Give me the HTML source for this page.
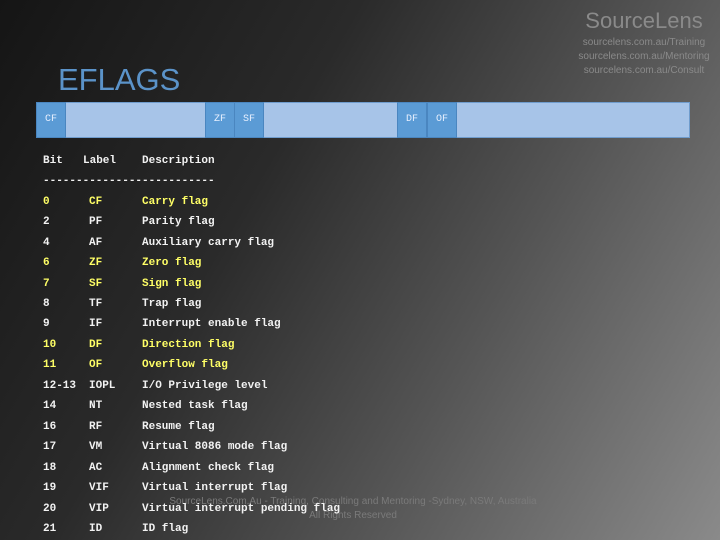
<!DOCTYPE html>
<html><head><meta charset="utf-8"><style>
*{margin:0;padding:0;box-sizing:border-box}
html,body{width:720px;height:540px;overflow:hidden}
body{position:relative;
background:linear-gradient(120deg,#151515 0%,#2a2a2a 35%,#555 65%,#8a8a8a 100%);
font-family:"Liberation Sans",sans-serif}
.abs{position:absolute;white-space:pre}
.logo{color:#8a8a8a;text-align:center;left:564px;width:160px}
.bar{position:absolute;left:36px;top:102px;width:654px;height:36px;background:#a7c4e8;border:1px solid #6f9ccd}
.c{position:absolute;top:102px;height:36px;background:#5b9bd5;border:1px solid #4a86c0;color:#e8f0ff;font:10px "Liberation Mono",monospace;padding-left:8px;line-height:34px}
.m{font-family:"Liberation Mono",monospace;font-size:11px;font-weight:bold;color:#f2f2f2;line-height:13px}
.y{color:#ffff66}
.foot{color:#7a7a7a;font-size:10px;text-align:center;width:400px;left:153px}
</style></head><body>
<div class="abs logo" style="top:8px;font-size:22px">SourceLens</div>
<div class="abs logo" style="top:37px;font-size:10px">sourcelens.com.au/Training</div>
<div class="abs logo" style="top:51px;font-size:10px">sourcelens.com.au/Mentoring</div>
<div class="abs logo" style="top:65px;font-size:10px">sourcelens.com.au/Consult</div>
<div class="abs" style="left:58px;top:62px;font-size:31px;color:#5b93c9">EFLAGS</div>
<div class="bar"></div>
<div class="c" style="left:36px;width:30px">CF</div>
<div class="c" style="left:205px;width:30px">ZF</div>
<div class="c" style="left:234px;width:30px">SF</div>
<div class="c" style="left:397px;width:30px">DF</div>
<div class="c" style="left:427px;width:30px">OF</div>
<div class="abs foot" style="top:496px">SourceLens.Com.Au - Training, Consulting and Mentoring -Sydney, NSW, Australia</div>
<div class="abs foot" style="top:510px">All Rights Reserved</div>
<div class="abs m" style="left:43px;top:155px">Bit</div><div class="abs m" style="left:83px;top:155px">Label</div><div class="abs m" style="left:142px;top:155px">Description</div>
<div class="abs m" style="left:43px;top:175px">--------------------------</div>
<div class="abs m y" style="left:43px;top:196px">0</div><div class="abs m y" style="left:89px;top:196px">CF</div><div class="abs m y" style="left:142px;top:196px">Carry flag</div>
<div class="abs m" style="left:43px;top:216px">2</div><div class="abs m" style="left:89px;top:216px">PF</div><div class="abs m" style="left:142px;top:216px">Parity flag</div>
<div class="abs m" style="left:43px;top:237px">4</div><div class="abs m" style="left:89px;top:237px">AF</div><div class="abs m" style="left:142px;top:237px">Auxiliary carry flag</div>
<div class="abs m y" style="left:43px;top:257px">6</div><div class="abs m y" style="left:89px;top:257px">ZF</div><div class="abs m y" style="left:142px;top:257px">Zero flag</div>
<div class="abs m y" style="left:43px;top:278px">7</div><div class="abs m y" style="left:89px;top:278px">SF</div><div class="abs m y" style="left:142px;top:278px">Sign flag</div>
<div class="abs m" style="left:43px;top:298px">8</div><div class="abs m" style="left:89px;top:298px">TF</div><div class="abs m" style="left:142px;top:298px">Trap flag</div>
<div class="abs m" style="left:43px;top:318px">9</div><div class="abs m" style="left:89px;top:318px">IF</div><div class="abs m" style="left:142px;top:318px">Interrupt enable flag</div>
<div class="abs m y" style="left:43px;top:339px">10</div><div class="abs m y" style="left:89px;top:339px">DF</div><div class="abs m y" style="left:142px;top:339px">Direction flag</div>
<div class="abs m y" style="left:43px;top:359px">11</div><div class="abs m y" style="left:89px;top:359px">OF</div><div class="abs m y" style="left:142px;top:359px">Overflow flag</div>
<div class="abs m" style="left:43px;top:380px">12-13</div><div class="abs m" style="left:89px;top:380px">IOPL</div><div class="abs m" style="left:142px;top:380px">I/O Privilege level</div>
<div class="abs m" style="left:43px;top:400px">14</div><div class="abs m" style="left:89px;top:400px">NT</div><div class="abs m" style="left:142px;top:400px">Nested task flag</div>
<div class="abs m" style="left:43px;top:421px">16</div><div class="abs m" style="left:89px;top:421px">RF</div><div class="abs m" style="left:142px;top:421px">Resume flag</div>
<div class="abs m" style="left:43px;top:441px">17</div><div class="abs m" style="left:89px;top:441px">VM</div><div class="abs m" style="left:142px;top:441px">Virtual 8086 mode flag</div>
<div class="abs m" style="left:43px;top:462px">18</div><div class="abs m" style="left:89px;top:462px">AC</div><div class="abs m" style="left:142px;top:462px">Alignment check flag</div>
<div class="abs m" style="left:43px;top:482px">19</div><div class="abs m" style="left:89px;top:482px">VIF</div><div class="abs m" style="left:142px;top:482px">Virtual interrupt flag</div>
<div class="abs m" style="left:43px;top:503px">20</div><div class="abs m" style="left:89px;top:503px">VIP</div><div class="abs m" style="left:142px;top:503px">Virtual interrupt pending flag</div>
<div class="abs m" style="left:43px;top:523px">21</div><div class="abs m" style="left:89px;top:523px">ID</div><div class="abs m" style="left:142px;top:523px">ID flag</div>
</body></html>
